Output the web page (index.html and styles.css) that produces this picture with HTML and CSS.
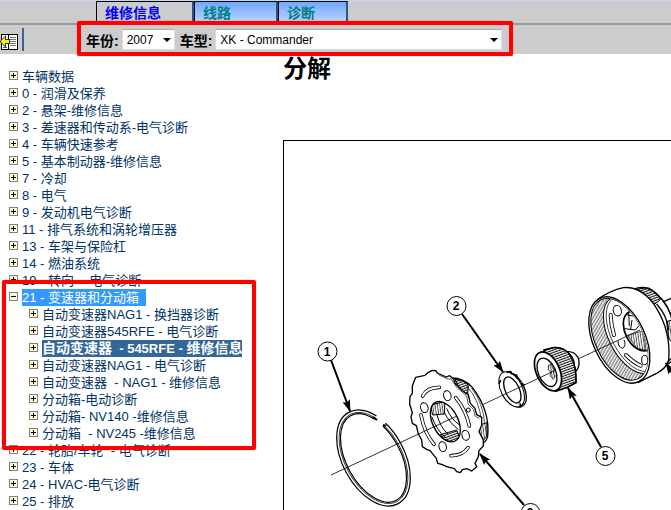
FILE: index.html
```html
<!DOCTYPE html>
<html lang="zh-CN">
<head>
    <meta charset="UTF-8">
    <meta name="viewport" content="width=device-width, initial-scale=1.0">
    <title>维修信息</title>
    <link rel="stylesheet" href="styles.css">
</head>
<body>
    <nav class="tabs">
        <a class="tab active" href="#info">维修信息</a>
        <a class="tab" href="#wiring">线路</a>
        <a class="tab short" href="#diagnosis">诊断</a>
    </nav>

    <header class="toolbar">
        <button class="toc-button" type="button" aria-label="目录">
            <svg width="19" height="18" viewBox="0 0 19 18">
                <path d="M1 1h17v16H1z" fill="#000"/>
                <path d="M2 2h6v14H2zM9 2h8v14H9z" fill="#fff"/>
                <path d="M10 4h6v1h-6zM10 6h6v1h-6zM10 8h6v1h-6zM10 10h6v1h-6zM10 12h6v1h-6z" fill="#777"/>
                <path d="M3 14h4v1H3z" fill="#336699"/>
                <path d="M0 8L6 2v4h4v5H6v4L0 9z" fill="#333"/>
                <path d="M1 8L5 4v3h4v3H5v3L1 9z" fill="#ffee00"/>
            </svg>
        </button>
        <form class="vehicle-form">
            <label for="year">年份:</label>
            <span class="select-box">
                <select id="year"><option>2007</option></select>
            </span>
            <label for="model">车型:</label>
            <span class="select-box wide">
                <select id="model"><option>XK - Commander</option></select>
            </span>
        </form>
    </header>

    <div class="page">
        <ul class="tree">
            <li><button class="toggle" aria-label="展开"></button><a href="#">车辆数据</a></li>
            <li><button class="toggle" aria-label="展开"></button><a href="#">0 - 润滑及保养</a></li>
            <li><button class="toggle" aria-label="展开"></button><a href="#">2 - 悬架-维修信息</a></li>
            <li><button class="toggle" aria-label="展开"></button><a href="#">3 - 差速器和传动系-电气诊断</a></li>
            <li><button class="toggle" aria-label="展开"></button><a href="#">4 - 车辆快速参考</a></li>
            <li><button class="toggle" aria-label="展开"></button><a href="#">5 - 基本制动器-维修信息</a></li>
            <li><button class="toggle" aria-label="展开"></button><a href="#">7 - 冷却</a></li>
            <li><button class="toggle" aria-label="展开"></button><a href="#">8 - 电气</a></li>
            <li><button class="toggle" aria-label="展开"></button><a href="#">9 - 发动机电气诊断</a></li>
            <li><button class="toggle" aria-label="展开"></button><a href="#">11 - 排气系统和涡轮增压器</a></li>
            <li><button class="toggle" aria-label="展开"></button><a href="#">13 - 车架与保险杠</a></li>
            <li><button class="toggle" aria-label="展开"></button><a href="#">14 - 燃油系统</a></li>
            <li><button class="toggle" aria-label="展开"></button><a href="#">19 - 转向 &nbsp;- 电气诊断</a></li>
            <li class="branch">
                <button class="toggle open" aria-label="收起"></button><a class="current" href="#">21 - 变速器和分动箱</a>
                <ul>
                    <li><button class="toggle" aria-label="展开"></button><a href="#">自动变速器NAG1 - 换挡器诊断</a></li>
                    <li><button class="toggle" aria-label="展开"></button><a href="#">自动变速器545RFE - 电气诊断</a></li>
                    <li><button class="toggle" aria-label="展开"></button><a class="selected" href="#">自动变速器<span class="latin">&nbsp; - 545RFE - </span>维修信息</a></li>
                    <li><button class="toggle" aria-label="展开"></button><a href="#">自动变速器NAG1 - 电气诊断</a></li>
                    <li><button class="toggle" aria-label="展开"></button><a href="#">自动变速器 &nbsp;- NAG1 - 维修信息</a></li>
                    <li><button class="toggle" aria-label="展开"></button><a href="#">分动箱-电动诊断</a></li>
                    <li><button class="toggle" aria-label="展开"></button><a href="#">分动箱- NV140 -维修信息</a></li>
                    <li><button class="toggle" aria-label="展开"></button><a href="#">分动箱 &nbsp;- NV245 -维修信息</a></li>
                </ul>
            </li>
            <li><button class="toggle" aria-label="展开"></button><a href="#">22 - 轮胎/车轮 &nbsp;- 电气诊断</a></li>
            <li><button class="toggle" aria-label="展开"></button><a href="#">23 - 车体</a></li>
            <li><button class="toggle" aria-label="展开"></button><a href="#">24 - HVAC-电气诊断</a></li>
            <li><button class="toggle" aria-label="展开"></button><a href="#">25 - 排放</a></li>
        </ul>

        <main class="content">
            <h1>分解</h1>
            <div class="figure">
                <svg viewBox="284 141 387 369" fill="none" stroke="#000" stroke-linejoin="round">
                    <defs>
                        <marker id="arrow" viewBox="0 0 12 8" refX="11" refY="4" markerWidth="12" markerHeight="8" markerUnits="userSpaceOnUse" orient="auto">
                            <path d="M0 0L12 4L0 8L2 4z" fill="#000" stroke="none"/>
                        </marker>
                        <pattern id="knurl" width="9" height="7" patternUnits="userSpaceOnUse" patternTransform="rotate(-20)">
                            <path d="M0 3h9" stroke="#000" stroke-width="3"/>
                        </pattern>
                        <pattern id="teeth" width="8" height="8" patternUnits="userSpaceOnUse" patternTransform="rotate(-35)">
                            <path d="M3 0v8" stroke="#000" stroke-width="2"/>
                        </pattern>
                        <pattern id="shade" width="7" height="7" patternUnits="userSpaceOnUse" patternTransform="rotate(-8)">
                            <path d="M3 0v7" stroke="#000" stroke-width="2"/>
                        </pattern>
                        <clipPath id="drum">
                            <ellipse cx="448" cy="208" rx="131" ry="72" transform="rotate(65 448 208)"/>
                        </clipPath>
                        <clipPath id="bore">
                            <ellipse cx="511" cy="425" rx="65" ry="38" transform="rotate(63 511 425)"/>
                        </clipPath>
                    </defs>

                    <!-- 1: snap ring, open at the top right -->
                    <g transform="translate(373.5 458) rotate(61.5)" stroke-dasharray="219 16 125">
                        <ellipse rx="50" ry="29" pathLength="360" stroke-width="5"/>
                        <ellipse rx="50" ry="29" pathLength="360" stroke="#fff" stroke-width="2.6"/>
                        <ellipse rx="49.500" ry="28.500" pathLength="360" stroke-width=".7"/>
                    </g>
                    <path d="M373 417l4 3M383 425l3 1" stroke-width="2"/>

                    <!-- 3: reaction plate -->
                    <g transform="translate(275 280) scale(.33333)" stroke-width="4">
                        <path d="M530 294Q566 294 592 322Q646 392 638 470Q632 490 618 490L560 440z" fill="#fff" stroke-width="4"/>
                        <path d="M540 298Q568 300 580 316L578 344L552 325z" fill="url(#knurl)" stroke-width="3"/>
                        <path d="M612 436L636 428L635 470L620 486L612 460z" fill="url(#shade)" stroke-width="3"/>
                        <path d="M575 318Q616 362 620 432M590 325Q624 368 629 430" stroke-width="2"/>
                        <path d="M450 286L460 277L472 271L482 272L487 279L514 291L524 287L536 297L540 310L562 332L580 345L586 370L600 385L605 404L620 412L620 436L612 455L625 480L625 498L612 512L610 530L600 550L605 560L590 573L575 566L562 569L556 578L545 575L538 566L515 560L500 553L488 550L484 535L465 512L455 508L442 500L440 480L430 462L424 437L412 430L408 410L412 398L404 372L405 350L412 340L412 318L422 292L436 289z" fill="#fff"/>
                        <path d="M490 284L518 297L529 297L545 322L575 348L580 373L596 389L600 408L613 416" stroke-width="2"/>
                        <ellipse cx="511" cy="425" rx="65" ry="38" transform="rotate(63 511 425)" fill="#fff"/>
                        <g clip-path="url(#bore)">
                            <path d="M466 375L510 365L508 402L473 405z" fill="url(#shade)" stroke-width="3"/>
                            <path d="M496 464L545 450L560 485L520 493z" fill="url(#knurl)" stroke-width="3"/>
                            <path d="M470 410Q485 450 512 474M486 404Q494 438 518 462M508 398Q525 430 550 448M515 385Q528 418 554 435" stroke-width="3"/>
                        </g>
                        <g stroke-linecap="round" stroke-width="11">
                            <path d="M443 348Q455 323 493 322"/>
                            <path d="M542 353Q573 390 583 438"/>
                            <path d="M438 405Q448 460 477 493"/>
                            <path d="M528 527Q565 526 579 503"/>
                        </g>
                        <g stroke="#fff" stroke-linecap="round" stroke-width="6">
                            <path d="M443 348Q455 323 493 322"/>
                            <path d="M542 353Q573 390 583 438"/>
                            <path d="M438 405Q448 460 477 493"/>
                            <path d="M528 527Q565 526 579 503"/>
                        </g>
                        <g fill="#fff" stroke-width="3">
                            <ellipse cx="517" cy="347" rx="11" ry="15" transform="rotate(-15 517 347)"/>
                            <ellipse cx="448" cy="383" rx="11" ry="15" transform="rotate(-15 448 383)"/>
                            <ellipse cx="572" cy="466" rx="11" ry="15" transform="rotate(-15 572 466)"/>
                            <ellipse cx="503" cy="500" rx="11" ry="15" transform="rotate(-15 503 500)"/>
                            <circle cx="580" cy="390" r="6"/>
                        </g>
                    </g>

                    <g transform="translate(470 270) scale(.33333)" stroke-width="4">
                        <!-- 2: thrust washer -->
                        <ellipse cx="129" cy="359" rx="57" ry="33" transform="rotate(61 129 359)" fill="#fff"/>
                        <ellipse cx="125" cy="358" rx="57" ry="32" transform="rotate(63 125 358)" fill="#fff" stroke-width="3"/>
                        <ellipse cx="127" cy="360" rx="42" ry="21" transform="rotate(65 127 360)" fill="#fff"/>
                        <path d="M110 307l12 -2l4 8M128 312l12 4l2 10M152 340l12 5M150 400l2 12M92 330l-5 12" stroke-width="5"/>

                        <!-- 5: sun gear -->
                        <path d="M285 246Q310 240 324 262Q334 288 316 306z" fill="#fff"/>
                        <path d="M296 248Q316 262 314 300" stroke-width="3"/>
                        <path d="M222 240L254 232Q286 232 302 258Q320 290 318 338L292 352L256 364z" fill="#fff"/>
                        <path d="M222 240L254 232Q286 232 302 258Q320 290 318 338L292 352L256 364z" fill="url(#knurl)"/>
                        <ellipse cx="234" cy="304" rx="62" ry="35" transform="rotate(66 234 304)" fill="#fff" stroke-width="5"/>
                        <ellipse cx="231" cy="307" rx="45" ry="26" transform="rotate(66 231 307)" fill="#fff"/>
                        <path d="M235 286l10 -4l2 12l6 4l-2 14l5 6l-6 10l-10 -10l3 -12l-8 -6z" fill="url(#shade)" stroke-width="2"/>

                        <!-- 4: annulus gear -->
                        <path d="M490 58Q512 48 538 55Q598 92 612 170L612 270L580 290z" fill="#fff"/>
                        <path d="M500 58Q525 50 545 60Q562 70 572 88L552 104Q530 75 500 58z" fill="url(#knurl)" stroke-width="3"/>
                        <path d="M582 94L606 84M560 102Q592 138 596 180M578 92Q600 118 606 150"/>
                        <path d="M590 155L612 148L612 225L596 205z" fill="url(#shade)" stroke-width="3"/>
                        <path d="M592 275L606 264"/>
                        <path d="M383 88Q420 62 460 53Q510 48 550 100Q604 178 596 270Q590 294 560 310L505 337z" fill="#fff"/>
                        <ellipse cx="448" cy="210" rx="138" ry="78" transform="rotate(65 448 210)" fill="#fff"/>
                        <ellipse cx="448" cy="208" rx="131" ry="72" transform="rotate(65 448 208)" fill="url(#teeth)" stroke-width="3"/>
                        <g clip-path="url(#drum)">
                            <ellipse cx="482" cy="195" rx="125" ry="66" transform="rotate(63 482 195)" fill="#fff" stroke-width="3"/>
                            <ellipse cx="488" cy="192" rx="122" ry="64" transform="rotate(63 488 192)" stroke-width="2"/>
                            <ellipse cx="506" cy="183" rx="64" ry="40" transform="rotate(63 506 183)" fill="#fff" stroke-width="5"/>
                            <path d="M472 196L520 182L528 240L502 236z" fill="url(#shade)" stroke-width="2"/>
                            <path d="M468 134L500 140L508 166L496 180L464 176M476 128L478 168M486 150L482 178" stroke-width="3"/>
                            <path d="M422 135L425 165L432 195" stroke-linecap="round" stroke-width="12"/>
                            <path d="M422 135L425 165L432 195" stroke="#fff" stroke-linecap="round" stroke-width="7"/>
                            <path d="M468 255Q488 276 512 287" stroke-linecap="round" stroke-width="12"/>
                            <path d="M468 255Q488 276 512 287" stroke="#fff" stroke-linecap="round" stroke-width="7"/>
                            <ellipse cx="442" cy="122" rx="12" ry="16" transform="rotate(-15 442 122)" stroke-width="3"/>
                            <ellipse cx="524" cy="270" rx="9" ry="14" stroke-width="3"/>
                            <path d="M444 212Q444 232 458 235Q470 226 462 210" stroke-width="3"/>
                        </g>
                    </g>

                    <!-- centre line -->
                    <path d="M331 475L457 416M482 405L556 370M578 359L640 330" stroke-width=".8"/>

                    <g stroke-width="2" marker-end="url(#arrow)">
                        <path d="M331 360L350 411"/>
                        <path d="M462 314L503 372"/>
                        <path d="M601 447L568 388"/>
                        <path d="M524 505L480 454"/>
                        <path d="M676 379L666 363"/>
                    </g>
                    <g fill="#fff">
                        <circle cx="327.5" cy="351.5" r="9.5"/>
                        <circle cx="456.5" cy="306" r="9.5"/>
                        <circle cx="605.5" cy="456" r="9.5"/>
                        <circle cx="530.5" cy="513" r="9.5"/>
                    </g>
                    <g class="callouts" stroke="none">
                        <text x="327" y="356">1</text>
                        <text x="456" y="310">2</text>
                        <text x="605" y="460">5</text>
                        <text x="530" y="517">3</text>
                    </g>
                </svg>
            </div>
        </main>
    </div>
</body>
</html>
```
FILE: styles.css
```css
* {
    margin: 0;
    padding: 0;
    box-sizing: border-box;
}

body {
    font-family: "Liberation Sans", "Noto Sans CJK SC", sans-serif;
    font-size: 13px;
    background-color: #fff;
    color: #000;
    overflow: hidden;
}

a {
    color: #003366;
    text-decoration: none;
}

.tabs {
    display: flex;
    height: 25px;
    padding-left: 96px;
    background-color: #ccc;
    border-top: 1px solid #c3d5f5;
    border-bottom: 2px solid #999;
}

.tab {
    width: 84px;
    padding-left: 8px;
    font-size: 14px;
    font-weight: bold;
    line-height: 22px;
    color: #008080;
    background: linear-gradient(#6fa8ff, #bcd6ff);
    border-top: 1px solid #000;
    border-left: 1px solid #000;
    border-right: 2px solid #2a5580;
}

.tab.active {
    width: 98px;
    color: #0000ff;
    background: #ccc;
}

.tab.short {
    width: 70px;
}

.toolbar {
    display: flex;
    align-items: center;
    height: 29px;
    background-color: #ccc;
}

.toc-button {
    display: flex;
    align-items: flex-end;
    width: 24px;
    height: 23px;
    background: none;
    border: none;
    border-right: 2px solid #336699;
    margin-right: 53px;
}

.toc-button svg {
    flex: none;
}

.vehicle-form {
    position: relative;
    display: flex;
    align-items: center;
    width: 65%;
    padding: 0 11px 0 9px;
}

/* red highlight frames */
.vehicle-form::after,
.branch::after {
    content: "";
    position: absolute;
    border: 4px solid #ff0000;
    border-radius: 2px;
    box-shadow: 0 0 1px #ff0000;
    pointer-events: none;
}

.vehicle-form::after {
    inset: -8px 0 -6px;
}

.vehicle-form label {
    font-size: 14px;
    font-weight: bold;
    margin-right: 3px;
}

.select-box {
    position: relative;
    width: 53px;
    margin-right: 5px;
}

.select-box.wide {
    flex: 1;
    margin-right: 0;
}

.select-box::after {
    content: "";
    position: absolute;
    right: 4px;
    top: 9px;
    border: 4px solid transparent;
    border-top-color: #000;
    border-bottom: none;
    pointer-events: none;
}

select {
    display: block;
    width: 100%;
    height: 21px;
    padding-left: 4px;
    font-family: inherit;
    font-size: 12px;
    color: #000;
    background-color: #fff;
    border: 1px solid #ddd;
    border-top-color: #aaa;
    border-radius: 2px;
    appearance: none;
}

.page {
    display: grid;
    grid-template-columns: 283px 1fr;
}

.tree {
    padding-top: 14px;
    list-style: none;
    line-height: 18px;
    white-space: nowrap;
}

.tree li {
    padding-left: 9px;
}

.tree ul {
    list-style: none;
    padding-left: 11px;
}

.tree li:not(.branch) {
    height: 17px;
}

.tree a {
    display: inline-block;
    height: 17px;
    vertical-align: top;
}

.toggle {
    width: 9px;
    height: 9px;
    margin: 3px 4px 0 0;
    vertical-align: top;
    border: 1px solid #808080;
    background:
        linear-gradient(#000, #000) center / 5px 1px no-repeat,
        linear-gradient(#000, #000) center / 1px 5px no-repeat,
        #ffffcc;
}

.toggle.open {
    background:
        linear-gradient(#000, #000) center / 5px 1px no-repeat,
        #ffffcc;
}

.branch {
    position: relative;
    line-height: 17px;
}

.branch::after {
    inset: -9px 27px -8px 2px;
}

.tree .current {
    padding-right: 7px;
    color: #fff;
    background-color: #3399ff;
}

.tree .selected {
    font-size: 14px;
    font-weight: bold;
    color: #fff;
    background-color: #336699;
}

.latin {
    font-size: 13px;
}

.content {
    display: flex;
    flex-direction: column;
    min-width: 0;
}

.content h1 {
    font-size: 24px;
    line-height: 30px;
    margin-bottom: 56px;
}

.figure {
    flex: 1;
    border-top: 1px solid #000;
    border-left: 1px solid #000;
}

.figure svg {
    display: block;
    width: 100%;
}

.callouts {
    fill: #000;
    font-size: 12px;
    font-weight: bold;
    text-anchor: middle;
}
```
